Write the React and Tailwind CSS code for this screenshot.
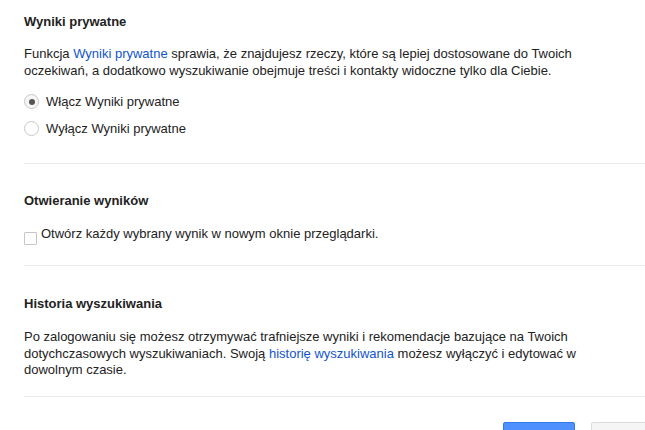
export default function App() {
  return (
    <div className="w-[645px] h-[430px] overflow-hidden bg-white text-[13px] text-[#222] font-['Liberation_Sans',Arial,sans-serif]">
      <div className="pl-[24px]">
        {/* Section 1 */}
        <div className="pt-[13px] pb-[26px] border-b border-[#ebebeb]">
          <h2 className="font-bold leading-[17px]">Wyniki prywatne</h2>
          <p className="mt-[15px] leading-[17px]">
            Funkcja <span className="text-[#15c]">Wyniki prywatne</span> sprawia, że znajdujesz rzeczy, które są lepiej dostosowane do Twoich
            <br />
            oczekiwań, a dodatkowo wyszukiwanie obejmuje treści i kontakty widoczne tylko dla Ciebie.
          </p>
          <div className="mt-[14px] flex flex-col gap-[10px]">
            <div className="flex items-center h-[17px]">
              <span className="w-[15px] h-[15px] rounded-full border border-[#c8c8c8] bg-[#f6f6f6] flex items-center justify-center">
                <span className="w-[6px] h-[6px] rounded-full bg-[#555]" />
              </span>
              <span className="ml-[7px] leading-[17px]">Włącz Wyniki prywatne</span>
            </div>
            <div className="flex items-center h-[17px]">
              <span className="w-[15px] h-[15px] rounded-full border border-[#c8c8c8] bg-white" />
              <span className="ml-[7px] leading-[17px]">Wyłącz Wyniki prywatne</span>
            </div>
          </div>
        </div>

        {/* Section 2 */}
        <div className="pt-[28px] pb-[23px] border-b border-[#ebebeb]">
          <h2 className="font-bold leading-[17px]">Otwieranie wyników</h2>
          <div className="mt-[16px] flex items-start h-[17px]">
            <span className="mt-[7px] w-[13px] h-[13px] border border-[#c6c6c6] bg-white rounded-[1px]" />
            <span className="ml-[4px] leading-[17px]">Otwórz każdy wybrany wynik w nowym oknie przeglądarki.</span>
          </div>
        </div>

        {/* Section 3 */}
        <div className="pt-[29px] pb-[17px] border-b border-[#ebebeb]">
          <h2 className="font-bold leading-[17px]">Historia wyszukiwania</h2>
          <p className="mt-[17px] leading-[16.5px]">
            Po zalogowaniu się możesz otrzymywać trafniejsze wyniki i rekomendacje bazujące na Twoich
            <br />
            dotychczasowych wyszukiwaniach. Swoją <span className="text-[#15c]">historię wyszukiwania</span> możesz wyłączyć i edytować w
            <br />
            dowolnym czasie.
          </p>
        </div>

        {/* Buttons */}
        <div className="pt-[25px] flex justify-end gap-[16px] -mr-[70px]">
          <button className="w-[72px] h-[29px] rounded-[2px] bg-[#4d90fe] border border-[#3079ed]" />
          <button className="w-[124px] h-[29px] rounded-[2px] bg-[#f5f5f5] border border-[#dcdcdc]" />
        </div>
      </div>
    </div>
  );
}
